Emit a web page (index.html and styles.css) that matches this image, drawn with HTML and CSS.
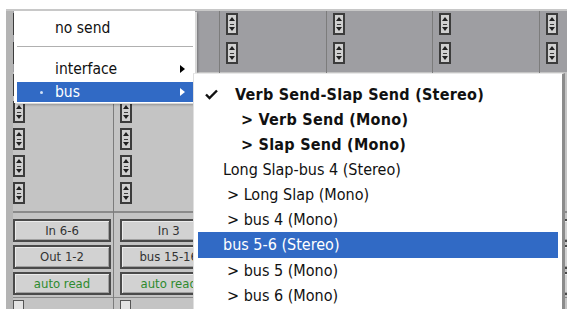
FILE: index.html
```html
<!DOCTYPE html>
<html>
<head>
<meta charset="utf-8">
<link rel="stylesheet" href="styles.css">
</head>
<body>
<div class="screen">
  <div class="mixer">
    <div class="strip">
      <div class="inserts"><span class="spin"></span><span class="spin"></span></div>
      <div class="sends"><span class="spin"></span><span class="spin"></span><span class="spin"></span><span class="spin"></span><span class="spin"></span></div>
      <div class="io"><div class="btn">In 6-6</div><div class="btn">Out 1-2</div><div class="btn auto">auto read</div></div>
      <div class="foot"><span class="box"></span></div>
    </div>
    <div class="strip">
      <div class="inserts"><span class="spin"></span><span class="spin"></span></div>
      <div class="sends"><span class="spin"></span><span class="spin"></span><span class="spin"></span><span class="spin"></span><span class="spin"></span></div>
      <div class="io"><div class="btn">In 3</div><div class="btn">bus 15-16</div><div class="btn auto">auto read</div></div>
      <div class="foot"><span class="box"></span></div>
    </div>
    <div class="strip">
      <div class="inserts"><span class="spin"></span><span class="spin"></span></div>
      <div class="sends"><span class="spin"></span><span class="spin"></span><span class="spin"></span><span class="spin"></span><span class="spin"></span></div>
      <div class="io"><div class="btn"></div><div class="btn"></div><div class="btn"></div></div>
      <div class="foot"><span class="box"></span></div>
    </div>
    <div class="strip">
      <div class="inserts"><span class="spin"></span><span class="spin"></span></div>
      <div class="sends"><span class="spin"></span><span class="spin"></span><span class="spin"></span><span class="spin"></span><span class="spin"></span></div>
      <div class="io"><div class="btn"></div><div class="btn"></div><div class="btn"></div></div>
      <div class="foot"><span class="box"></span></div>
    </div>
    <div class="strip">
      <div class="inserts"><span class="spin"></span><span class="spin"></span></div>
      <div class="sends"><span class="spin"></span><span class="spin"></span><span class="spin"></span><span class="spin"></span><span class="spin"></span></div>
      <div class="io"><div class="btn"></div><div class="btn"></div><div class="btn"></div></div>
      <div class="foot"><span class="box"></span></div>
    </div>
    <div class="strip">
      <div class="inserts"><span class="spin"></span><span class="spin"></span></div>
      <div class="sends"><span class="spin"></span><span class="spin"></span><span class="spin"></span><span class="spin"></span><span class="spin"></span></div>
      <div class="io"><div class="btn"></div><div class="btn"></div><div class="btn"></div></div>
      <div class="foot"><span class="box"></span></div>
    </div>
  </div>

  <div class="menu main-menu">
    <div class="item first">no send</div>
    <div class="sep"></div>
    <div class="item">interface<span class="arrow"></span></div>
    <div class="item hi bus"><span class="dot"></span>bus<span class="arrow"></span></div>
  </div>

  <div class="menu sub-menu">
    <div class="row bold head"><svg class="check" width="13" height="11" viewBox="0 0 13 11"><path d="M1 5.5 L4.5 9 L12 1.5" fill="none" stroke="#111" stroke-width="2.4"/></svg>Verb Send-Slap Send (Stereo)</div>
    <div class="row bold sub">&gt; Verb Send (Mono)</div>
    <div class="row bold sub">&gt; Slap Send (Mono)</div>
    <div class="row head2">Long Slap-bus 4 (Stereo)</div>
    <div class="row sub2">&gt; Long Slap (Mono)</div>
    <div class="row sub2">&gt; bus 4 (Mono)</div>
    <div class="row head2 hi">bus 5-6 (Stereo)</div>
    <div class="row sub2">&gt; bus 5 (Mono)</div>
    <div class="row sub2">&gt; bus 6 (Mono)</div>
  </div>
</div>
</body>
</html>
```

FILE: styles.css
```css
html, body {
  margin: 0;
  padding: 0;
  background: #ffffff;
}
.screen {
  position: relative;
  width: 567px;
  height: 309px;
  overflow: hidden;
  font-family: "DejaVu Sans Condensed", "DejaVu Sans", sans-serif;
}
.mixer {
  margin: 9px 0 0 6px;
  display: flex;
  border-top: 2px solid #c8c8c8;
}
.strip {
  width: 106.4px;
  flex: none;
  display: flex;
  flex-direction: column;
  border-left: 1px solid #7c7c7c;
  box-sizing: border-box;
}
.strip:first-child {
  border-left: 7px solid #b4b4b4;
  width: 107px;
}
.inserts {
  height: 61px;
  background: #9e9ea2;
  display: flex;
  flex-direction: column;
  gap: 7px;
  padding: 2px 0 0 6px;
  box-sizing: border-box;
}
.strip:first-child .inserts,
.strip:first-child .sends,
.strip:first-child .io,
.strip:first-child .foot { padding-left: 0; }
.sends {
  height: 139px;
  background: #c4c4c4;
  display: flex;
  flex-direction: column;
  gap: 5px;
  padding: 2px 0 0 6px;
  box-sizing: border-box;
}
.spin {
  display: block;
  width: 12px;
  height: 22px;
  box-sizing: border-box;
  border: 2px solid #3c3c3c;
  background:
    linear-gradient(#3c3c3c, #3c3c3c) center 9px / 4px 1px no-repeat,
    #d0d0d0;
  position: relative;
}
.spin::before,
.spin::after {
  content: "";
  position: absolute;
  left: 1px;
  border-left: 3px solid transparent;
  border-right: 3px solid transparent;
}
.spin::before {
  top: 2px;
  border-bottom: 4px solid #202020;
}
.spin::after {
  bottom: 2px;
  border-top: 4px solid #202020;
}
.io {
  background: #c4c4c4;
  border-top: 2px solid #8a8a8a;
  display: flex;
  flex-direction: column;
  gap: 3px;
  padding: 6px 2px 2px 6px;
  height: 86px;
  box-sizing: border-box;
}
.btn {
  height: 24px;
  box-sizing: border-box;
  border: 2px solid #4a4a4a;
  background: #d2d2d2;
  box-shadow: inset 1px 1px 0 #ececec, inset -1px -1px 0 #a0a0a0;
  font-size: 13px;
  line-height: 20px;
  text-align: center;
  color: #333;
  white-space: nowrap;
  overflow: hidden;
}
.btn.auto { color: #2e8a2e; }
.foot {
  background: #c4c4c4;
  border-top: 1px solid #8a8a8a;
  height: 20px;
  padding: 2px 0 0 6px;
}
.box {
  display: block;
  width: 11px;
  height: 11px;
  box-sizing: border-box;
  border: 1px solid #555;
  background: #e4e4e4;
}

.menu {
  position: absolute;
  background: #ffffff;
  color: #111;
}
.main-menu {
  left: 14px;
  top: 11px;
  width: 181px;
  padding: 3px 2px 1px 3px;
  box-sizing: border-box;
  box-shadow: 2px 1px 0 #d8d8d8, 3px 2px 2px rgba(0,0,0,0.25);
  font-size: 15.5px;
}
.main-menu .item {
  position: relative;
  height: 22px;
  line-height: 22px;
  padding-left: 38px;
}
.main-menu .item.first {
  height: 30px;
  line-height: 29px;
}
.main-menu .sep {
  height: 12px;
  box-sizing: border-box;
  border-top: 1px solid #b0b0b0;
  margin-top: 2px;
}
.main-menu .item.bus {
  margin-top: 2px;
  height: 20px;
  line-height: 20px;
}
.hi {
  background: #316ac5;
  color: #ffffff;
}
.arrow {
  position: absolute;
  right: 8px;
  top: 7px;
  border-top: 4px solid transparent;
  border-bottom: 4px solid transparent;
  border-left: 5px solid #000;
}
.hi .arrow {
  border-left-color: #ffffff;
  top: 6px;
}
.dot {
  position: absolute;
  left: 23px;
  top: 9px;
  width: 3px;
  height: 3px;
  border-radius: 50%;
  background: #cfe0f6;
}

.sub-menu {
  left: 193px;
  top: 73px;
  width: 372px;
  height: 250px;
  box-sizing: border-box;
  padding: 8px 4px 0 4px;
  border-left: 1px solid #e0e0e0;
  border-top: 1px solid #e8e8e8;
  border-right: 3px solid #8c8c8c;
  font-size: 16px;
}
.row {
  position: relative;
  height: 25px;
  line-height: 25px;
  white-space: nowrap;
}
.row.bold {
  font-weight: bold;
  letter-spacing: 0.25px;
}
.row.head { padding-left: 37px; }
.row.sub { padding-left: 43px; }
.row.head2 { padding-left: 25px; }
.row.sub2 { padding-left: 29px; }
.row.hi { height: 26px; line-height: 26px; }
.check {
  position: absolute;
  left: 7px;
  top: 7px;
}
```
